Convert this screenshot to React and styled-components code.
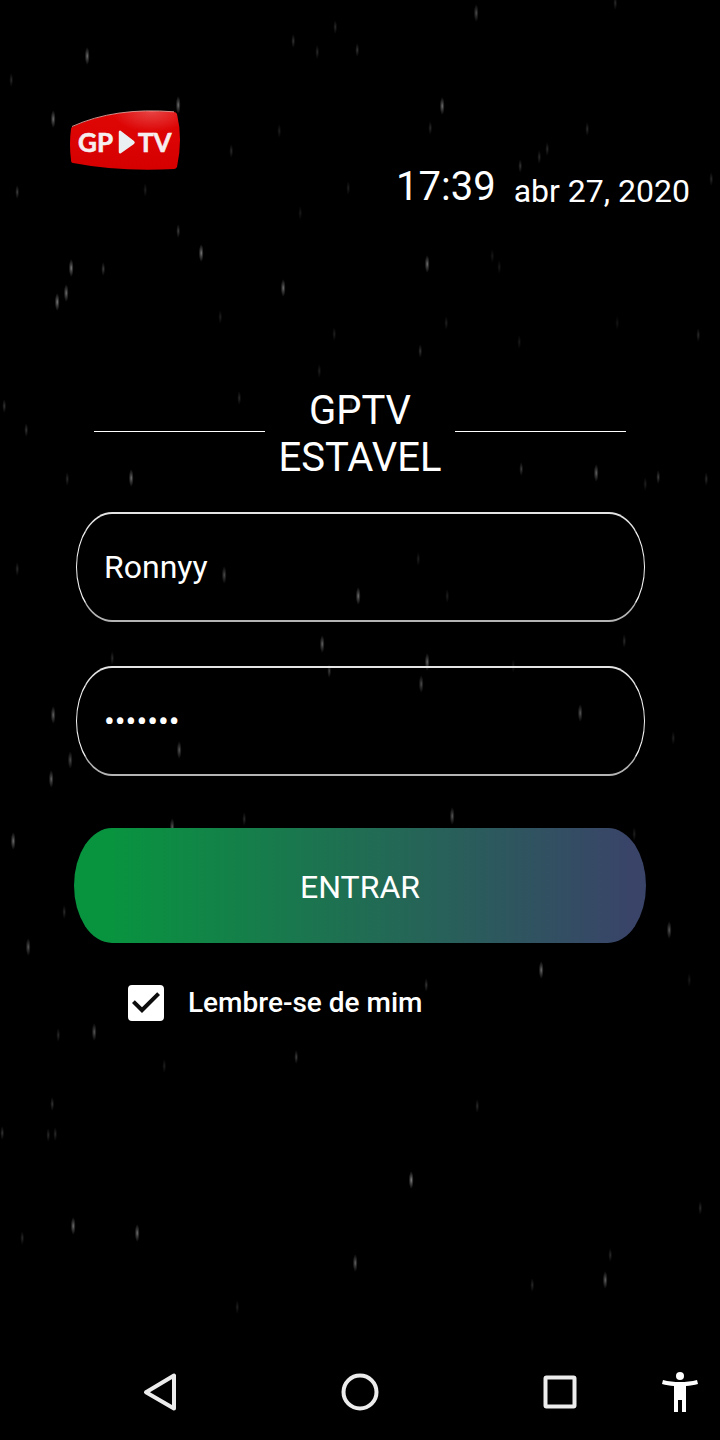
import React, { useState } from 'react';
import styled, { createGlobalStyle } from 'styled-components';

const GlobalStyle = createGlobalStyle`
  * {
    box-sizing: border-box;
  }

  body {
    margin: 0;
    background: #000;
    color: #fff;
    font-family: Roboto, 'Liberation Sans', sans-serif;
  }
`;

const Screen = styled.div`
  position: relative;
  display: flex;
  flex-direction: column;
  min-height: 100vh;
  overflow: hidden;
`;

// Falling snow behind everything
const Snow = styled.svg`
  position: absolute;
  inset: 0;
  width: 100%;
  height: 100%;
  pointer-events: none;
`;

const Header = styled.header`
  position: relative;
  display: flex;
  justify-content: space-between;
  align-items: flex-start;
  padding: 110px 30px 0 70px;
`;

const Clock = styled.div`
  display: flex;
  align-items: flex-end;
  gap: 18px;
  padding-top: 53px;
`;

const Time = styled.time`
  font-size: 40px;
  line-height: 47px;
`;

const DateText = styled.span`
  font-size: 32px;
  line-height: 38px;
`;

const Form = styled.form`
  position: relative;
  display: flex;
  flex-direction: column;
  padding: 0 74px;
  margin-top: 177px;
`;

const TitleRow = styled.div`
  display: flex;
  align-items: center;
  gap: 14px;
  padding: 0 20px;
  margin-bottom: 31px;
`;

const Rule = styled.span`
  flex: 1;
  height: 1px;
  margin-bottom: 5px;
  background: #fff;
`;

const Title = styled.h1`
  width: min-content;
  margin: 0;
  font-size: 40px;
  font-weight: 400;
  line-height: 47px;
  text-align: center;
`;

const Fields = styled.div`
  display: flex;
  flex-direction: column;
  gap: 44px;
  padding: 0 1px 0 2px;
  margin-bottom: 52px;
`;

const Field = styled.input`
  width: 100%;
  height: 110px;
  padding: 0 27px;
  border: solid;
  border-width: 2px 1px;
  border-color: #e4e4e4 #f4f4f4 #b4b4b4;
  border-radius: 36px / 50%;
  outline: none;
  background: transparent;
  color: #fff;
  font-family: inherit;
  font-size: 32px;
`;

const SubmitButton = styled.button`
  height: 115px;
  padding: 2px 0 0;
  border: 0;
  border-radius: 38px / 50%;
  background: linear-gradient(to right, #08943f 6%, #394468 97%);
  color: #fff;
  font-family: inherit;
  font-size: 32px;
  cursor: pointer;
`;

const Remember = styled.label`
  display: flex;
  align-items: center;
  align-self: flex-start;
  gap: 24px;
  margin: 42px 0 0 54px;
  font-size: 28px;
  font-weight: 500;
  line-height: 36px;
  cursor: pointer;
`;

const CheckBox = styled.span`
  position: relative;
  width: 36px;
  height: 36px;

  input {
    appearance: none;
    display: block;
    width: 36px;
    height: 36px;
    margin: 0;
    border: 4px solid #fff;
    border-radius: 4px;
  }

  input:checked {
    background: #fff;
  }

  svg {
    position: absolute;
    inset: 0;
    pointer-events: none;
  }

  input:not(:checked) + svg {
    display: none;
  }
`;

const NavBar = styled.nav`
  position: relative;
  display: grid;
  grid-template-columns: 1fr 1fr 1fr 60px;
  align-items: center;
  height: 96px;
  padding-left: 60px;
  margin-top: auto;
`;

const NavButton = styled.button`
  justify-self: ${({ $edge }) => ($edge ? 'start' : 'center')};
  width: 40px;
  height: 40px;
  padding: 0;
  border: 0;
  background: none;
  color: ${({ $edge }) => ($edge ? '#fff' : '#ececec')};
  cursor: pointer;

  svg {
    display: block;
  }
`;

// [x, y, brightness]
const flakes = [
  [476, 13, 0.35], [615, 3, 0.2], [335, 27, 0.2], [293, 41, 0.25], [317, 52, 0.2],
  [357, 50, 0.25], [87, 56, 0.5], [11, 80, 0.2], [178, 105, 0.5], [53, 119, 0.5],
  [442, 106, 0.5], [430, 128, 0.2], [587, 129, 0.2], [279, 131, 0.15], [231, 151, 0.2],
  [547, 149, 0.2], [539, 157, 0.2], [520, 166, 0.25], [17, 192, 0.3], [145, 190, 0.15],
  [348, 188, 0.15], [711, 179, 0.2], [300, 213, 0.12], [178, 231, 0.3], [201, 253, 0.55],
  [427, 264, 0.5], [492, 256, 0.12], [499, 267, 0.12], [71, 268, 0.55], [103, 269, 0.3],
  [66, 293, 0.5], [57, 302, 0.55], [283, 288, 0.5], [220, 317, 0.15], [446, 323, 0.15],
  [617, 323, 0.1], [334, 334, 0.15], [698, 335, 0.2], [519, 342, 0.12], [420, 351, 0.25],
  [319, 371, 0.15], [239, 398, 0.2], [4, 406, 0.25], [26, 430, 0.25], [351, 405, 0.25],
  [67, 479, 0.2], [131, 478, 0.5], [521, 469, 0.3], [596, 473, 0.45], [658, 477, 0.3],
  [645, 484, 0.15], [706, 479, 0.2], [17, 569, 0.2], [224, 575, 0.35], [418, 559, 0.15],
  [358, 596, 0.5], [447, 596, 0.15], [322, 644, 0.45], [624, 641, 0.2], [112, 658, 0.2],
  [427, 662, 0.45], [329, 671, 0.3], [513, 666, 0.12], [421, 684, 0.35], [53, 715, 0.45],
  [580, 713, 0.4], [673, 738, 0.15], [179, 750, 0.4], [70, 760, 0.35], [51, 779, 0.45],
  [452, 816, 0.4], [244, 819, 0.2], [172, 827, 0.4], [13, 841, 0.5], [634, 834, 0.15],
  [64, 912, 0.2], [669, 930, 0.4], [28, 947, 0.4], [541, 970, 0.5], [426, 985, 0.25],
  [689, 980, 0.12], [94, 1032, 0.4], [58, 1035, 0.2], [296, 1057, 0.3], [164, 1066, 0.15],
  [52, 1104, 0.25], [477, 1106, 0.2], [2, 1133, 0.25], [48, 1135, 0.2], [55, 1134, 0.2],
  [411, 1180, 0.6], [700, 1208, 0.2], [73, 1226, 0.5], [137, 1233, 0.5], [22, 1238, 0.2],
  [610, 1255, 0.2], [355, 1263, 0.45], [605, 1280, 0.45], [532, 1285, 0.2], [237, 1307, 0.15],
];

const SnowLayer = () => (
  <Snow viewBox="0 0 720 1440" preserveAspectRatio="xMidYMid slice" aria-hidden="true">
    <defs>
      <radialGradient id="flake">
        <stop offset="0" stopColor="#fff" />
        <stop offset="0.4" stopColor="#fff" stopOpacity="0.5" />
        <stop offset="1" stopColor="#fff" stopOpacity="0" />
      </radialGradient>
    </defs>
    {flakes.map(([x, y, glow]) => (
      <ellipse
        key={`${x}-${y}`}
        cx={x + 0.2}
        cy={y}
        rx={glow > 0.3 ? 2.5 : 2}
        ry={glow > 0.3 ? 9 : 7}
        fill="url(#flake)"
        opacity={glow * 0.9}
      />
    ))}
  </Snow>
);

const Logo = () => (
  <svg width="110" height="60" viewBox="0 0 110 60" role="img" aria-label="GPTV">
    <defs>
      <linearGradient id="logoRed" x1="0" y1="0" x2="0" y2="1">
        <stop offset="0" stopColor="#e00606" />
        <stop offset="1" stopColor="#d60000" />
      </linearGradient>
      <radialGradient id="logoShine" cx="0.74" cy="0" r="0.36">
        <stop offset="0" stopColor="#fff" stopOpacity="0.25" />
        <stop offset="1" stopColor="#fff" stopOpacity="0" />
      </radialGradient>
    </defs>
    <path d="M2 17Q45 -3 104 2Q106 2 107 4Q113 29 107 57Q106 59 104 59Q50 62 3 53Q1 53 1 50Q-1 34 1 19Q1 18 2 17Z" fill="url(#logoRed)" />
    <path d="M2 17Q45 -3 104 2Q106 2 107 4Q113 29 107 57Q106 59 104 59Q50 62 3 53Q1 53 1 50Q-1 34 1 19Q1 18 2 17Z" fill="url(#logoShine)" />
    <path d="M2 16.5Q45 -3 104 1.8" fill="none" stroke="#f7b0a8" strokeWidth="0.8" />
    <g fill="#f6eeee" stroke="#f6eeee" strokeWidth="0.6" fontFamily="Lato, sans-serif" fontSize="26" fontWeight="700">
      <text x="8" y="42">GP</text>
      <text x="68" y="42">TV</text>
    </g>
    <path d="M50.500 21.500L63.500 31.500Q64.500 32.500 63.500 33.500L50.500 42.500Q49.500 43 49.500 42V22Q49.500 21 50.500 21.500Z" fill="#eaf0f2" stroke="#eaf0f2" strokeWidth="1.500" />
  </svg>
);

const App = () => {
  const [user, setUser] = useState('Ronnyy');
  const [password, setPassword] = useState('1234567');
  const [remember, setRemember] = useState(true);

  return (
    <>
      <GlobalStyle />
      <Screen>
        <SnowLayer />

        <Header>
          <Logo />
          <Clock>
            <Time>17:39</Time>
            <DateText>abr 27, 2020</DateText>
          </Clock>
        </Header>

        <Form onSubmit={(e) => e.preventDefault()}>
          <TitleRow>
            <Rule />
            <Title>GPTV ESTAVEL</Title>
            <Rule />
          </TitleRow>

          <Fields>
            <Field
              type="text"
              aria-label="Usuário"
              value={user}
              onChange={(e) => setUser(e.target.value)}
            />
            <Field
              type="password"
              aria-label="Senha"
              value={password}
              onChange={(e) => setPassword(e.target.value)}
            />
          </Fields>

          <SubmitButton type="submit">ENTRAR</SubmitButton>

          <Remember>
            <CheckBox>
              <input
                type="checkbox"
                checked={remember}
                onChange={(e) => setRemember(e.target.checked)}
              />
              <svg width="36" height="36" viewBox="3 3 18 18" aria-hidden="true">
                <path d="M10 17l-5-5 1.410-1.410L10 14.170l7.590-7.590L19 8z" fill="#0c0c0c" />
              </svg>
            </CheckBox>
            Lembre-se de mim
          </Remember>
        </Form>

        <NavBar>
          <NavButton type="button" aria-label="Voltar">
            <svg width="40" height="40" viewBox="0 0 40 40" fill="none" stroke="currentColor" strokeWidth="4" strokeLinejoin="round">
              <path d="M34 3.500V36.500L6 20.200Z" />
            </svg>
          </NavButton>
          <NavButton type="button" aria-label="Início">
            <svg width="40" height="40" viewBox="0 0 40 40" fill="none" stroke="currentColor" strokeWidth="4">
              <circle cx="20" cy="20" r="16.500" />
            </svg>
          </NavButton>
          <NavButton type="button" aria-label="Recentes">
            <svg width="40" height="40" viewBox="0 0 40 40" fill="none" stroke="currentColor" strokeWidth="4" strokeLinejoin="round">
              <rect x="5.500" y="5.500" width="29" height="29" rx="1" />
            </svg>
          </NavButton>
          <NavButton type="button" aria-label="Acessibilidade" $edge>
            <svg width="40" height="40" viewBox="2 2 20 20" fill="currentColor">
              <path d="M20.500 6c-2.610.7-5.670 1-8.500 1s-5.890-.3-8.500-1L3 8c1.860.5 4 .83 6 1v13h2v-6h2v6h2V9c2-.17 4.140-.5 6-1l-.5-2z" />
              <circle cx="12" cy="4" r="2" />
            </svg>
          </NavButton>
        </NavBar>
      </Screen>
    </>
  );
};

export default App;
